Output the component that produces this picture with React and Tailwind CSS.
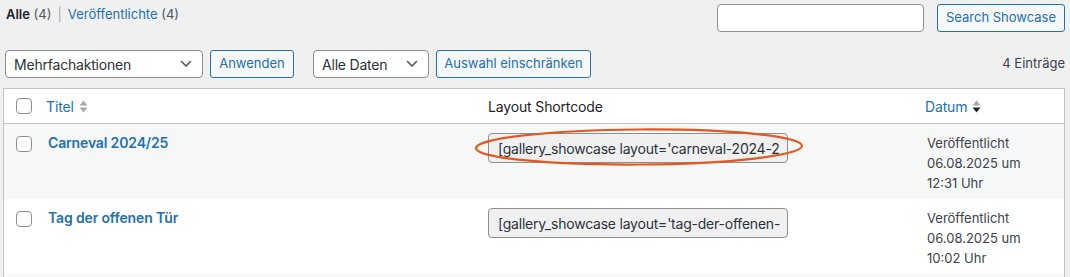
import React from 'react'

const ROWS = [
    {
        title: 'Carneval 2024/25',
        shortcode: "[gallery_showcase layout='carneval-2024-2",
        date: '06.08.2025 um',
        time: '12:31 Uhr',
        striped: true,
        marked: true,
    },
    {
        title: 'Tag der offenen Tür',
        shortcode: "[gallery_showcase layout='tag-der-offenen-",
        date: '06.08.2025 um',
        time: '10:02 Uhr',
        striped: false,
        marked: false,
    },
]

function Checkbox() {
    return <span className="block w-4 h-4 rounded-[4px] border border-[#8c8f94] bg-white" />
}

function Chevron() {
    return (
        <svg width="12" height="8" viewBox="0 0 12 8" fill="none">
            <path d="M1.5 1.5 6 6l4.5-4.5" stroke="#50575e" strokeWidth="1.6" strokeLinecap="round" strokeLinejoin="round" />
        </svg>
    )
}

function SortArrows({ active = false }) {
    return (
        <svg width="9" height="13" viewBox="0 0 9 13" className="ml-[5px]">
            <path d="M4.5 0.5 8.5 5.5H0.5z" fill="#a7aaad" />
            <path d="M0.5 7.5H8.5L4.5 12.5z" fill={active ? '#1d2327' : '#a7aaad'} />
        </svg>
    )
}

function Select({ label, width }) {
    return (
        <div className={`flex items-center justify-between h-[28px] ${width} pl-2 pr-[10px] rounded-[4px] border border-[#8c8f94] bg-white text-[14px] tracking-[-0.2px] text-[#2c3338]`}>
            <span>{label}</span>
            <Chevron />
        </div>
    )
}

function Button({ children, width }) {
    return (
        <div className={`flex items-center justify-center h-[28px] ${width} rounded-[3px] border border-[#2271b1] bg-[#f6f7f7] text-[13px] text-[#2271b1]`}>
            {children}
        </div>
    )
}

function Row({ title, shortcode, date, time, striped, marked }) {
    return (
        <div className={`flex h-[75px] ${striped ? 'bg-[#f6f7f7]' : 'bg-white'}`}>
            <div className="w-[34px] pt-[12px] pl-[12px] shrink-0">
                <Checkbox />
            </div>
            <div className="w-[440px] shrink-0 pl-[10px] pt-[9px] text-[14px] tracking-[-0.15px] leading-[20px] font-semibold text-[#2271b1]">
                {title}
            </div>
            <div className="relative w-[437px] shrink-0 pl-[10px] pt-[9px]">
                <div className="h-[30px] w-[300px] flex items-center overflow-hidden whitespace-nowrap pl-[9px] rounded-[4px] border border-[#8c8f94] bg-[#f0f0f1] text-[14px] tracking-[-0.22px] text-[#2c3338]">
                    {shortcode}
                </div>
                {marked && (
                    <svg className="absolute left-[-4px] top-[3px]" width="332" height="40" viewBox="0 0 332 40" fill="none">
                        <ellipse cx="165" cy="20" rx="163" ry="17.5" stroke="#e4581f" strokeWidth="2.2" transform="rotate(-0.4 165 20)" />
                    </svg>
                )}
            </div>
            <div className="flex-1 pl-[12px] pt-[9px] text-[13px] leading-[20px] text-[#3c434a]">
                <div>Veröffentlicht</div>
                <div>{date}</div>
                <div>{time}</div>
            </div>
        </div>
    )
}

export default function App() {
    return (
        <div className="w-[1070px] h-[277px] overflow-hidden bg-[#f0f0f1] font-['Inter','Liberation_Sans',Arial,sans-serif] text-[#3c434a]">
            <div className="flex justify-between pt-[4px] pl-[6px] pr-[5px]">
                <div className="pt-[1px] text-[13px] leading-[18px]">
                    <span className="font-semibold text-[#1d2327]">Alle</span>
                    <span className="text-[#50575e]"> (4)</span>
                    <span className="text-[#a7aaad] px-[6px]">|</span>
                    <span className="text-[#2271b1]">Veröffentlichte <span className="text-[#50575e]">(4)</span></span>
                </div>
                <div className="flex gap-[13px]">
                    <div className="w-[207px] h-[28px] rounded-[4px] border border-[#8c8f94] bg-white" />
                    <Button width="w-[128px]">Search Showcase</Button>
                </div>
            </div>

            <div className="flex items-center mt-[18px] pl-[5px] pr-[5px]">
                <Select label="Mehrfachaktionen" width="w-[198px]" />
                <div className="ml-[7px]"><Button width="w-[84px]">Anwenden</Button></div>
                <div className="ml-[19px]"><Select label="Alle Daten" width="w-[116px]" /></div>
                <div className="ml-[7px]"><Button width="w-[155px]">Auswahl einschränken</Button></div>
                <div className="ml-auto text-[13px] text-[#3c434a]">4 Einträge</div>
            </div>

            <div className="mt-[10px] ml-[3px] w-[1062px] border border-[#c3c4c7] bg-white">
                <div className="flex items-center h-[35px] border-b border-[#c3c4c7] text-[14px] tracking-[-0.15px]">
                    <div className="w-[34px] pl-[12px] shrink-0">
                        <Checkbox />
                    </div>
                    <div className="w-[440px] shrink-0 pl-[8px] flex items-center text-[#2271b1]">
                        Titel
                        <SortArrows />
                    </div>
                    <div className="w-[437px] shrink-0 pl-[10px] text-[#1d2327]">Layout Shortcode</div>
                    <div className="flex-1 pl-[10px] flex items-center text-[#2271b1]">
                        Datum
                        <SortArrows active />
                    </div>
                </div>
                {ROWS.map(row => (
                    <Row key={row.title} {...row} />
                ))}
                <div className="h-[20px] bg-[#f6f7f7]" />
            </div>
        </div>
    )
}
